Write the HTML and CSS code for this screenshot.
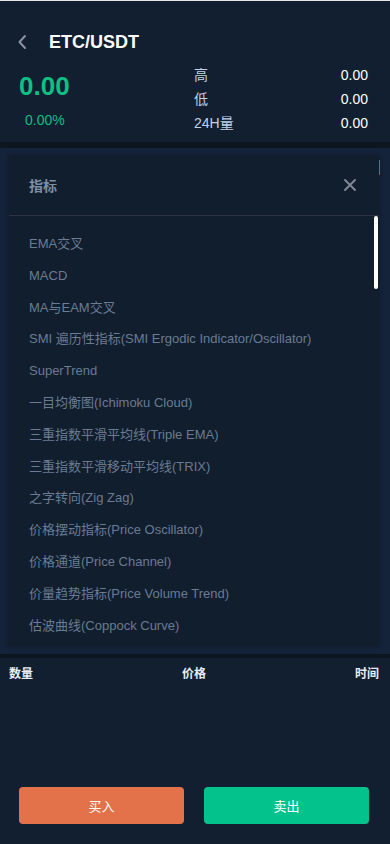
FILE: index.html
```html
<!DOCTYPE html>
<html lang="zh-CN">
<head>
<meta charset="utf-8">
<meta name="viewport" content="width=device-width, initial-scale=1">
<title>ETC/USDT</title>
<link rel="stylesheet" href="styles.css">
</head>
<body>
<div class="page">
  <header class="topbar">
    <svg class="back" width="10" height="16" viewBox="0 0 10 16"><path d="M8 2 L2.5 8 L8 14" fill="none" stroke="#8a939e" stroke-width="2" stroke-linecap="round" stroke-linejoin="round"/></svg>
    <h1 class="pair">ETC/USDT</h1>
  </header>
  <section class="ticker">
    <div class="price-col">
      <div class="price">0.00</div>
      <div class="change">0.00%</div>
    </div>
    <div class="stats">
      <div class="stat"><span class="label">高</span><span class="value">0.00</span></div>
      <div class="stat"><span class="label">低</span><span class="value">0.00</span></div>
      <div class="stat"><span class="label">24H量</span><span class="value">0.00</span></div>
    </div>
  </section>
  <div class="band"></div>
  <section class="chart">
    <span class="chart-mark"></span>
    <div class="modal">
      <div class="modal-head">
        <span class="modal-title">指标</span>
        <svg class="close" width="14" height="14" viewBox="0 0 14 14"><path d="M2 2 L12 12 M12 2 L2 12" stroke="#7d8894" stroke-width="2" stroke-linecap="round"/></svg>
      </div>
      <ul class="list">
        <li>EMA交叉</li>
        <li>MACD</li>
        <li>MA与EAM交叉</li>
        <li>SMI 遍历性指标(SMI Ergodic Indicator/Oscillator)</li>
        <li>SuperTrend</li>
        <li>一目均衡图(Ichimoku Cloud)</li>
        <li>三重指数平滑平均线(Triple EMA)</li>
        <li>三重指数平滑移动平均线(TRIX)</li>
        <li>之字转向(Zig Zag)</li>
        <li>价格摆动指标(Price Oscillator)</li>
        <li>价格通道(Price Channel)</li>
        <li>价量趋势指标(Price Volume Trend)</li>
        <li>估波曲线(Coppock Curve)</li>
      </ul>
      <span class="thumb"></span>
    </div>
  </section>
  <div class="band band-thin"></div>
  <section class="trades">
    <span class="th th-left">数量</span>
    <span class="th th-mid">价格</span>
    <span class="th th-right">时间</span>
  </section>
  <div class="spacer"></div>
  <footer class="actions">
    <button class="btn buy">买入</button>
    <button class="btn sell">卖出</button>
  </footer>
</div>
</body>
</html>
```

FILE: styles.css
```css
* { box-sizing: border-box; }
html, body { margin: 0; padding: 0; }
body {
  background: #111f30;
  font-family: "Liberation Sans", "Noto Sans CJK SC", sans-serif;
  color: #fff;
}
.page {
  width: 390px;
  height: 844px;
  display: flex;
  flex-direction: column;
  border-top: 1px solid #e6e6e6;
  overflow: hidden;
}
.topbar {
  display: flex;
  align-items: center;
  padding: 29px 0 9px 17px;
  height: 62px;
}
.back { display: block; margin-right: 22px; }
.pair {
  margin: 0;
  font-size: 18px;
  line-height: 24px;
  font-weight: bold;
  color: #fff;
}
.ticker {
  display: flex;
  justify-content: space-between;
  padding: 0 22px 7px 19px;
}
.price-col { display: flex; flex-direction: column; }
.price {
  margin-top: 7px;
  font-size: 26px;
  line-height: 32px;
  font-weight: bold;
  color: #0fbf84;
}
.change {
  margin-top: 8px;
  margin-left: 6px;
  font-size: 14px;
  line-height: 20px;
  color: #0fbf84;
}
.stats { width: 174px; display: flex; flex-direction: column; }
.stat {
  display: flex;
  justify-content: space-between;
  font-size: 14px;
  line-height: 24px;
}
.label { color: #c2d2e6; }
.value { color: #fff; }
.band { height: 6px; background: #0c1621; flex: none; }
.band-thin { height: 4px; }
.chart {
  position: relative;
  height: 506px;
  flex: none;
  background: #14233a;
}
.chart-mark {
  position: absolute;
  left: 379px;
  top: 12px;
  width: 1px;
  height: 15px;
  background: #3f8fd0;
}
.modal {
  position: absolute;
  left: 9px;
  top: 8px;
  width: 370px;
  height: 490px;
  background: #111e2e;
  box-shadow: 0 0 4px rgba(0, 0, 0, 0.35);
  display: flex;
  flex-direction: column;
  overflow: hidden;
}
.modal-head {
  height: 60px;
  flex: none;
  display: flex;
  align-items: center;
  justify-content: space-between;
  padding: 0 22px 2px 20px;
  border-bottom: 1px solid #2b3440;
}
.modal-title {
  font-size: 14px;
  font-weight: bold;
  color: #7f8ea3;
}
.close { display: block; }
.list {
  list-style: none;
  margin: 0;
  padding: 12px 0 0 20px;
}
.list li {
  font-size: 13px;
  line-height: 31.8px;
  height: 31.8px;
  color: #6a7b92;
  white-space: nowrap;
}
.thumb {
  position: absolute;
  left: 365px;
  top: 60px;
  width: 4px;
  height: 73px;
  border-radius: 2px;
  background: #fff;
}
.trades {
  display: grid;
  grid-template-columns: 1fr auto 1fr;
  align-items: center;
  height: 28px;
  padding: 0 11px 0 9px;
  font-size: 12px;
  font-weight: bold;
  color: #e8edf3;
}
.th-left { justify-self: start; }
.th-mid { justify-self: center; }
.th-right { justify-self: end; }
.spacer { flex: 1; }
.actions {
  display: flex;
  gap: 20px;
  padding: 0 21px 20px 19px;
}
.btn {
  flex: 1;
  height: 37px;
  border: none;
  border-radius: 4px;
  font-family: "Liberation Sans", "Noto Sans CJK SC", sans-serif;
  font-size: 13px;
  color: #fff;
}
.buy { background: #e3714a; }
.sell { background: #04c28b; }
```
